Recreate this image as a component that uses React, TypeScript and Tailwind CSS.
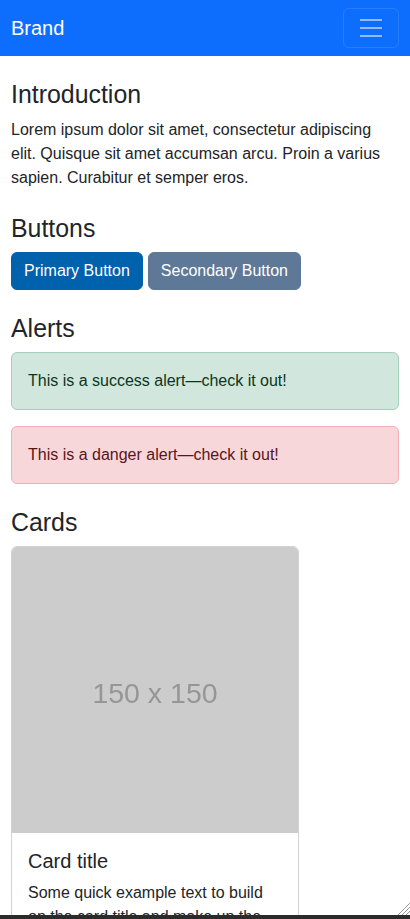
import React from "react";

const Heading = ({ children }: { children: React.ReactNode }) => (
  <h2 className="text-[24.9px] leading-[1.2] font-medium mb-2 text-[#212529]">{children}</h2>
);

const Navbar = () => (
  <nav className="h-14 bg-[#0d6efd] flex items-center justify-between px-[11px]">
    <span className="text-[20px] text-white leading-[30px]">Brand</span>
    <button className="w-14 h-10 border border-white/10 rounded-md flex items-center justify-center">
      <svg width="30" height="30" viewBox="0 0 30 30">
        <path d="M4 7h22M4 15h22M4 23h22" stroke="rgba(255,255,255,0.55)" strokeWidth="2" strokeLinecap="butt" />
      </svg>
    </button>
  </nav>
);

const App = () => {
  return (
    <div className="h-[919px] flex flex-col bg-white" style={{ fontFamily: '"Liberation Sans", Arial, sans-serif' }}>
      <div className="relative h-[915px] overflow-hidden">
        <Navbar />
        <main className="px-[11px] pt-6 text-[16px] leading-6 text-[#212529]">
          {/* Introduction */}
          <section className="mb-6">
            <Heading>Introduction</Heading>
            <p>
              Lorem ipsum dolor sit amet, consectetur adipiscing elit. Quisque sit amet accumsan arcu. Proin a varius
              sapien. Curabitur et semper eros.
            </p>
          </section>

          {/* Buttons */}
          <section className="mb-6">
            <Heading>Buttons</Heading>
            <div className="flex gap-[5px]">
              <button className="bg-[#0061ad] border border-[#0061ad] text-white rounded-md px-3 py-1.5 leading-6">
                Primary Button
              </button>
              <button className="bg-[#5e7897] border border-[#5e7897] text-white rounded-md px-3 py-1.5 leading-6">
                Secondary Button
              </button>
            </div>
          </section>

          {/* Alerts */}
          <section className="mb-6">
            <Heading>Alerts</Heading>
            <div className="bg-[#d1e7dd] border border-[#a3cfbb] text-[#0a3622] rounded-md p-4 mb-4">
              This is a success alert—check it out!
            </div>
            <div className="bg-[#f8d7da] border border-[#f1aeb5] text-[#58151c] rounded-md p-4">
              This is a danger alert—check it out!
            </div>
          </section>

          {/* Cards */}
          <section className="mb-6">
            <Heading>Cards</Heading>
            <div className="w-[288px] border border-black/[0.175] rounded-md overflow-hidden">
              <div className="h-[286px] bg-[#cccccc] flex items-center justify-center pt-[6px]">
                <span className="text-[28.5px] text-[#969696] blur-[0.4px]">150 x 150</span>
              </div>
              <div className="p-4">
                <h5 className="text-[20px] leading-[1.2] font-medium mb-2">Card title</h5>
                <p className="mb-4">
                  Some quick example text to build on the card title and make up the bulk of the card's content.
                </p>
                <button className="bg-[#0d6efd] text-white rounded-md px-3 py-1.5">Go somewhere</button>
              </div>
            </div>
          </section>
        </main>
        {/* resize grip */}
        <svg className="absolute right-0 bottom-0" width="14" height="14" viewBox="0 0 14 14">
          <path d="M14 2L2 14M14 6L6 14M14 10L10 14" stroke="#9a9a9a" strokeWidth="1" />
        </svg>
      </div>
      <div className="h-1 bg-[#2b2b2b]" />
    </div>
  );
};

export default App;
